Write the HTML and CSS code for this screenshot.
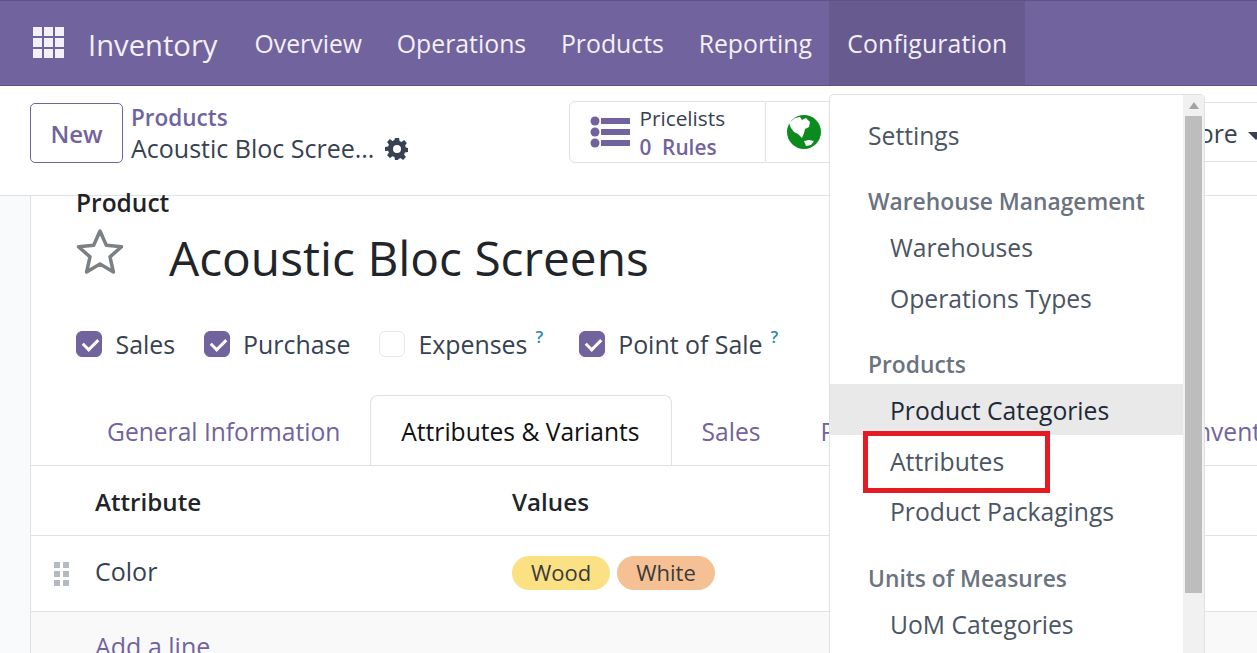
FILE: index.html
```html
<!DOCTYPE html>
<html lang="en">
<head>
  <meta charset="UTF-8">
  <title>Inventory - Acoustic Bloc Screens</title>
  <link rel="stylesheet" href="styles.css">
</head>
<body>

  <!-- Top bar -->
  <header class="navbar">
    <svg class="apps-icon" viewBox="0 0 32 32" width="32" height="32">
      <g fill="#f3f0f8">
        <rect x="0" y="0" width="9" height="9"/><rect x="11" y="0" width="9" height="9"/><rect x="22" y="0" width="9" height="9"/>
        <rect x="0" y="11" width="9" height="9"/><rect x="11" y="11" width="9" height="9"/><rect x="22" y="11" width="9" height="9"/>
        <rect x="0" y="22" width="9" height="9"/><rect x="11" y="22" width="9" height="9"/><rect x="22" y="22" width="9" height="9"/>
      </g>
    </svg>
    <span class="brand">Inventory</span>
    <nav class="nav-menu">
      <a>Overview</a>
      <a>Operations</a>
      <a>Products</a>
      <a>Reporting</a>
      <a class="open">Configuration</a>
    </nav>
  </header>

  <!-- Control panel -->
  <div class="control-panel">
    <button class="new-btn">New</button>
    <div class="breadcrumb">
      <a>Products</a>
      <div class="crumb-current">
        <span>Acoustic Bloc Scree...</span>
        <svg viewBox="0 0 24 24" width="24" height="24"><path fill="#374151" fill-rule="evenodd" d="M10 1h4l.6 3.1 1.9.8 2.6-1.8 2.8 2.8-1.8 2.6.8 1.9L23 11v4l-3.1.6-.8 1.900 1.800 2.600-2.800 2.800-2.600-1.800-1.900.8L13 23h-3l-.6-2.900-1.900-.8-2.600 1.800-2.800-2.800 1.800-2.600-.8-1.900L0 14v-4l3.100-.6.8-1.900-1.800-2.600L4.900 2.100l2.600 1.800 1.900-.8zM12 8a4 4 0 1 0 0 8 4 4 0 0 0 0-8z"/></svg>
      </div>
    </div>
    <div class="stat-buttons">
      <div class="stat-btn">
        <svg viewBox="0 0 40 32" width="40" height="32">
          <g fill="#71639e">
            <circle cx="5" cy="5" r="4.500"/><circle cx="5" cy="16" r="4.500"/><circle cx="5" cy="27" r="4.500"/>
            <rect x="11" y="2" width="29" height="6"/><rect x="11" y="13" width="29" height="6"/><rect x="11" y="24" width="29" height="6"/>
          </g>
        </svg>
        <div class="stat-text">
          <span>Pricelists</span>
          <b>0&nbsp; Rules</b>
        </div>
      </div>
      <div class="stat-btn globe-btn">
        <svg viewBox="0 0 34 34" width="34" height="34">
          <circle cx="17" cy="17" r="17" fill="#0b8a1e"/>
          <path fill="#fff" d="M2 8L8 3l5-1 2 3 4-2 4 4-1 5-4 2-1 4-2 5-4-4-4-2-3-4zM17 26l5-1 5 1-3 4-5 1z"/>
        </svg>
      </div>
      <div class="more-btn">More <i class="caret"></i></div>
    </div>
  </div>

  <!-- Form sheet -->
  <main class="content">
    <section class="sheet">
      <div class="label-product">Product</div>
      <div class="title-row">
        <svg viewBox="0 0 48 46" width="48" height="46"><path fill="none" stroke="#7b8084" stroke-width="3.500" stroke-linejoin="round" d="M24 3l6.300 14.300 15.200 1.500-11.500 10.100 3.400 15.100L24 36l-13.400 8 3.400-15.100L2.500 18.800l15.200-1.500z"/></svg>
        <h1>Acoustic Bloc Screens</h1>
      </div>
      <div class="checks">
        <label><i class="box on"></i>Sales</label>
        <label><i class="box on"></i>Purchase</label>
        <label><i class="box"></i>Expenses<sup>?</sup></label>
        <label><i class="box on"></i>Point of Sale<sup>?</sup></label>
      </div>
      <div class="tabs">
        <a>General Information</a>
        <a class="active">Attributes &amp; Variants</a>
        <a>Sales</a>
        <a>Purchase</a>
        <a>Point of Sale</a>
        <a>Inventory</a>
      </div>
      <div class="table-head">
        <span class="col-attr">Attribute</span>
        <span>Values</span>
      </div>
      <div class="table-row">
        <svg class="drag" viewBox="0 0 16 24" width="16" height="24">
          <g fill="#b4bac1">
            <rect x="0" y="0" width="6" height="6"/><rect x="9" y="0" width="6" height="6"/>
            <rect x="0" y="9" width="6" height="6"/><rect x="9" y="9" width="6" height="6"/>
            <rect x="0" y="18" width="6" height="6"/><rect x="9" y="18" width="6" height="6"/>
          </g>
        </svg>
        <span class="col-attr row-name">Color</span>
        <span class="tag tag-wood">Wood</span>
        <span class="tag tag-white">White</span>
      </div>
      <div class="add-row"><a>Add a line</a></div>
    </section>
  </main>

  <!-- Configuration dropdown -->
  <div class="dropdown">
    <div class="menu-list">
      <a class="item top">Settings</a>
      <div class="group">Warehouse Management</div>
      <a class="item sub">Warehouses</a>
      <a class="item sub">Operations Types</a>
      <div class="group">Products</div>
      <a class="item sub hover">Product Categories</a>
      <a class="item sub">Attributes</a>
      <a class="item sub">Product Packagings</a>
      <div class="group">Units of Measures</div>
      <a class="item sub">UoM Categories</a>
    </div>
    <div class="scrollbar"><i class="arrow"></i><i class="thumb"></i></div>
  </div>

  <!-- Red highlight around Attributes -->
  <div class="highlight"></div>

</body>
</html>
```

FILE: styles.css
```css
* {
  margin: 0;
  padding: 0;
  box-sizing: border-box;
}

body {
  width: 1257px;
  height: 653px;
  overflow: hidden;
  font-family: "Open Sans", "Noto Sans", sans-serif;
  color: #374151;
  background: #fff;
  display: flex;
  flex-direction: column;
}

/* Top bar */
.navbar {
  height: 86px;
  flex: none;
  display: flex;
  align-items: center;
  background: #71639e;
  border-top: 1px solid #5e5384;
  border-bottom: 1px solid #5e5384;
  color: #f3f0f8;
  padding-left: 33px;
}

.brand {
  font-size: 29.200px;
  margin-left: 23px;
  margin-right: 19.700px;
  padding-top: 3px;
}

.nav-menu {
  display: flex;
  height: 100%;
}

.nav-menu a {
  font-size: 24.800px;
  padding: 0 17.400px;
  display: flex;
  align-items: center;
}

.nav-menu a.open {
  background: #665a8e;
  padding: 0 18px;
  letter-spacing: 0.150px;
}

/* Control panel */
.control-panel {
  height: 110px;
  flex: none;
  display: flex;
  background: #fff;
  border-bottom: 1px solid #dee2e6;
  padding: 16px 0 0 30px;
}

.new-btn {
  width: 93px;
  height: 60px;
  margin-top: 1px;
  background: #fff;
  border: 1px solid #71639e;
  border-radius: 5px;
  color: #71639e;
  font: 600 24px "Open Sans", sans-serif;
}

.breadcrumb {
  margin-left: 8px;
  font-size: 25px;
  line-height: 31px;
}

.breadcrumb a {
  display: block;
  color: #71639e;
  font-weight: 600;
  font-size: 22.500px;
}

.crumb-current {
  display: flex;
  align-items: center;
  gap: 11px;
}

.stat-buttons {
  display: flex;
  margin-left: 160px;
  height: 62px;
  margin-top: -1px;
  flex: 1;
  min-width: 0;
  overflow: hidden;
}

.stat-btn {
  width: 197px;
  flex: none;
  border: 1px solid #dee2e6;
  border-radius: 6px 0 0 6px;
  display: flex;
  align-items: center;
  padding-left: 20px;
  gap: 9px;
}

.globe-btn {
  border-radius: 0;
  border-left: none;
  width: 220px;
  padding-left: 21px;
}

.stat-text {
  display: flex;
  flex-direction: column;
  font-size: 20.800px;
  line-height: 29px;
  padding-top: 2px;
}

.stat-text b {
  color: #71639e;
  font-weight: 600;
}

.more-btn {
  flex: 1;
  white-space: nowrap;
  font-size: 24.800px;
  padding-left: 190px;
  line-height: 60px;
  height: 60px;
  margin-top: 1px;
  border-top: 1px solid #dee2e6;
  border-bottom: 1px solid #dee2e6;
}

.caret {
  display: inline-block;
  margin-left: 4px;
  vertical-align: middle;
  border: 8px solid transparent;
  border-top: 8px solid #374151;
  border-bottom: none;
}

/* Form sheet */
.content {
  flex: 1;
  background: #f9fafb;
  padding-left: 30px;
  min-height: 0;
}

.sheet {
  background: #fff;
  border-left: 1px solid #dee2e6;
  height: 100%;
}

.label-product {
  color: #1f2328;
  font-size: 24.500px;
  font-weight: 600;
  line-height: 14px;
  padding: 0 0 0 45px;
}

.title-row {
  display: flex;
  align-items: center;
  padding: 9px 0 0 45px;
  height: 76px;
}

.title-row svg {
  margin-top: -4px;
}

.title-row h1 {
  font-size: 47.800px;
  font-weight: 400;
  color: #212529;
  margin-left: 45px;
  margin-top: 9px;
}

.checks {
  display: flex;
  padding: 42px 0 0 45px;
  font-size: 24.900px;
  font-weight: 500;
  gap: 28.500px;
}

.checks label {
  display: flex;
  align-items: center;
  height: 32px;
}

.box {
  width: 26px;
  height: 26px;
  border: 1px solid #e3e6ea;
  border-radius: 6px;
  margin-right: 13.500px;
  background: #fff;
}

.box.on {
  background: #71639e;
  border-color: #71639e;
  position: relative;
}

.box.on::after {
  content: "";
  position: absolute;
  left: 6px;
  top: 6px;
  width: 12px;
  height: 7px;
  border-left: 3.500px solid #fff;
  border-bottom: 3.500px solid #fff;
  transform: rotate(-45deg);
}

.checks sup {
  font-size: 17px;
  font-weight: 600;
  color: #2a8aa8;
  margin-left: 8px;
  margin-right: 7px;
  align-self: flex-start;
  line-height: 18px;
}

.tabs {
  display: flex;
  height: 71px;
  margin-top: 35px;
  border-bottom: 1px solid #dee2e6;
  padding-left: 46px;
  font-size: 24.600px;
  color: #71639e;
  overflow: hidden;
  white-space: nowrap;
}

.tabs a {
  flex: none;
  padding: 2px 30px 0;
  display: flex;
  align-items: center;
}

.tabs a.active {
  background: #fff;
  color: #111;
  border: 1px solid #dee2e6;
  border-bottom: none;
  border-radius: 8px 8px 0 0;
  height: 71px;
  padding: 0 31px 0 30px;
}

.table-head {
  display: flex;
  align-items: center;
  height: 70px;
  border-bottom: 1px solid #dee2e6;
  font-size: 24.200px;
  font-weight: 600;
  color: #212529;
  padding-left: 64px;
  padding-top: 2px;
}

.col-attr {
  width: 417px;
}

.table-row {
  display: flex;
  align-items: center;
  height: 76px;
  border-bottom: 1px solid #dee2e6;
  font-size: 25px;
  padding-left: 23px;
}

.drag {
  margin-right: 25px;
}

.row-name {
  margin-top: -5px;
}

.tag {
  font-size: 22px;
  line-height: 32px;
  height: 34px;
  margin-top: -2px;
  padding: 0 19px;
  border-radius: 17px;
  color: #3b3b3b;
  margin-right: 7px;
}

.tag-wood {
  background: #fbe084;
}

.tag-white {
  background: #f5c093;
}

.add-row {
  background: #f9f9fa;
  height: 60px;
  padding: 17px 0 0 64px;
  font-size: 25px;
  color: #71639e;
}

/* Configuration dropdown */
.dropdown {
  position: absolute;
  left: 829px;
  top: 94px;
  width: 376px;
  height: 559px;
  background: #fff;
  border: 1px solid #dee2e6;
  border-bottom: none;
  border-radius: 5px 5px 0 0;
  display: flex;
  overflow: hidden;
}

.menu-list {
  flex: 1;
  font-size: 24.700px;
}

.item {
  display: block;
  height: 50.600px;
  line-height: 54px;
  color: #4b5563;
}

.item.top {
  margin-top: 14px;
  padding-left: 38px;
}

.item.sub {
  padding-left: 60px;
}

.item.hover {
  background: #e9e9e9;
  color: #1f2937;
}

.group {
  height: 39px;
  margin-top: 22.700px;
  line-height: 39px;
  padding-left: 38px;
  font-size: 22.800px;
  font-weight: 600;
  color: #6b7280;
}

.scrollbar {
  width: 21px;
  background: #f1f1f1;
  position: relative;
}

.arrow {
  display: block;
  margin: 7px auto 0;
  width: 0;
  border: 5px solid transparent;
  border-bottom: 7px solid #a3a3a3;
  border-top: none;
}

.thumb {
  position: absolute;
  left: 2px;
  right: 2px;
  top: 21px;
  height: 477px;
  background: #bdbdbd;
}

/* Red highlight */
.highlight {
  position: absolute;
  left: 863px;
  top: 431px;
  width: 187px;
  height: 62px;
  border: 5px solid #e51b24;
}
```
